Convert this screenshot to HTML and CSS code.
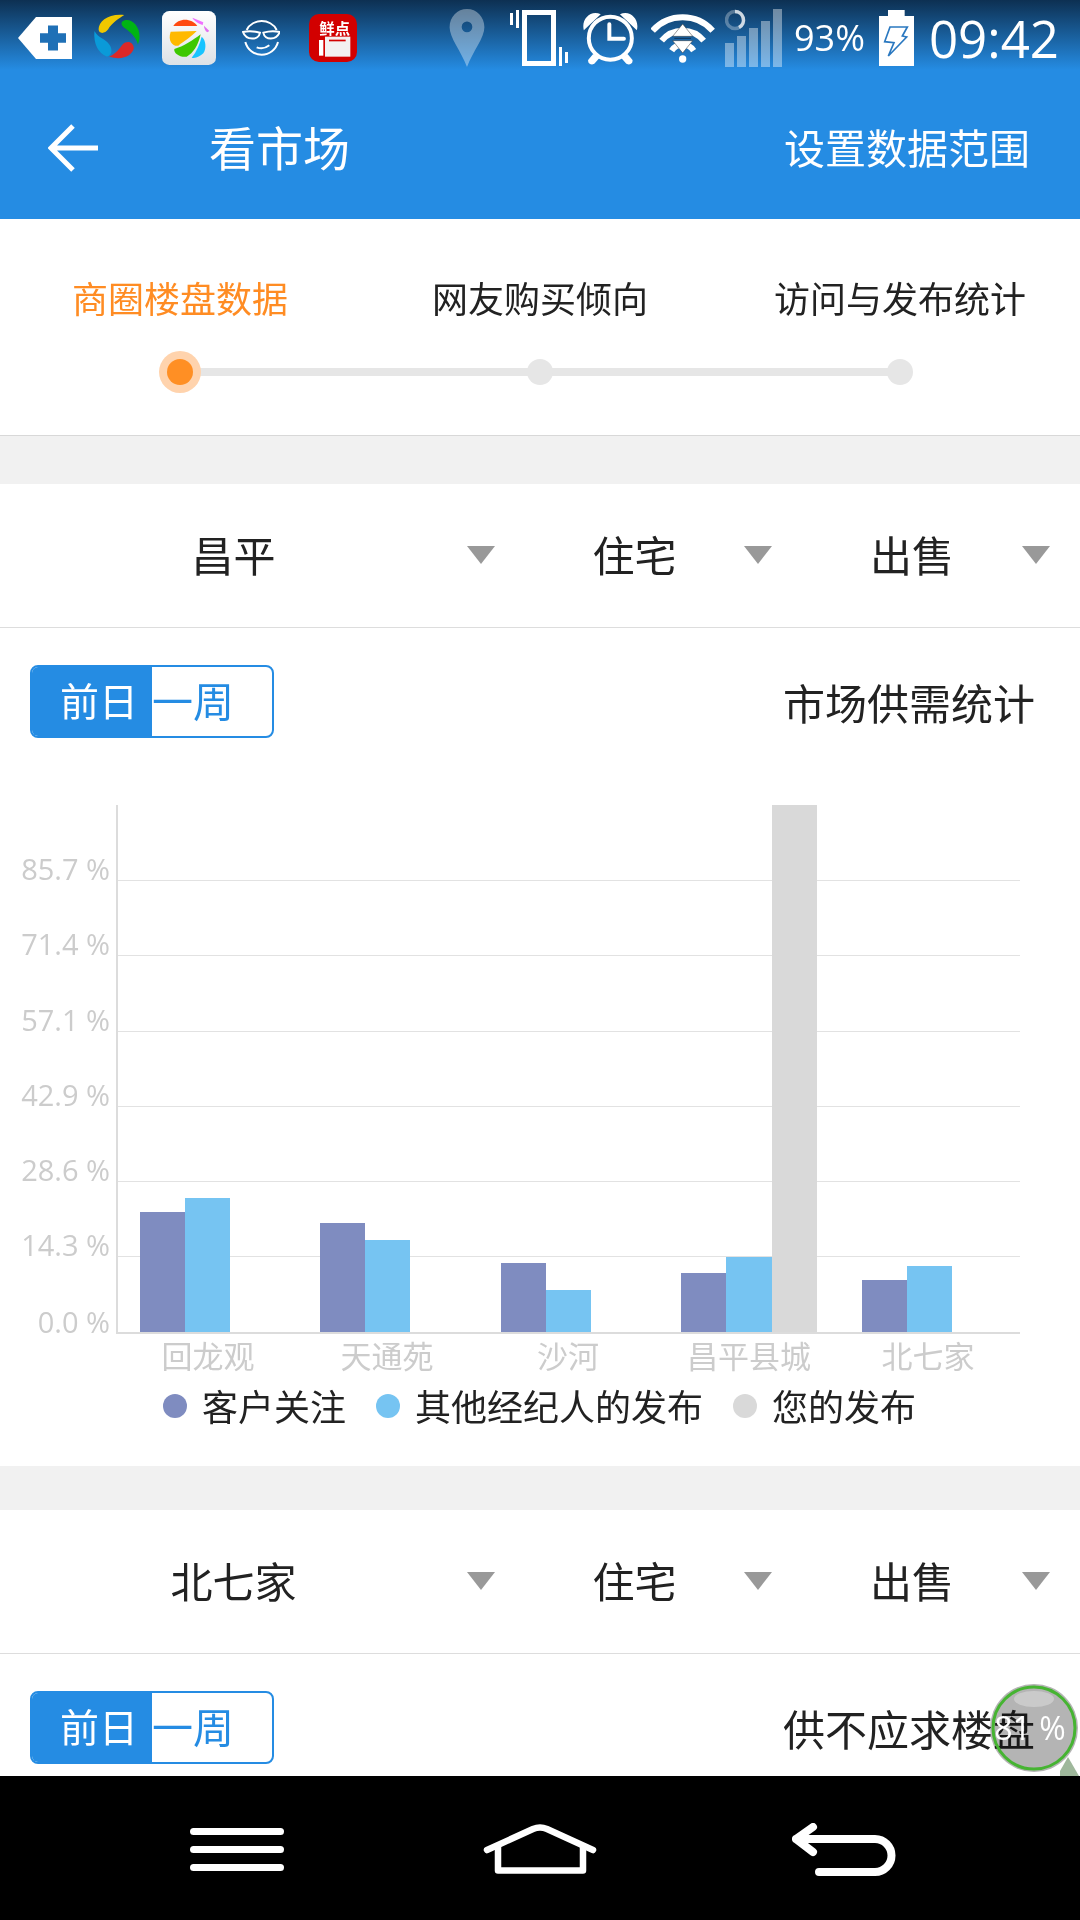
FILE: index.html
```html
<!DOCTYPE html>
<html lang="zh-CN">
<head>
    <meta charset="UTF-8">
    <meta name="viewport" content="width=device-width, initial-scale=1.0">
    <title>看市场</title>
    <link rel="stylesheet" href="styles.css">
</head>
<body>
<div class="page">

    <header class="header">
        <div class="status">
            <svg class="ic-tag" viewBox="0 0 54 44" preserveAspectRatio="none"><path fill="#fff" d="M0 22 18 0H54V44H18Z"/><path fill="#1f70b6" d="M30 9H40V17H48V27H40V35H30V27H22V17H30Z"/></svg>
            <svg class="ic-ball" viewBox="39 27 147 150">
                <path fill="#f0c800" d="M55 75C55 50 85 25 135 30 120 40 95 55 85 75 75 90 55 90 55 75Z"/>
                <path fill="#00b414" d="M130 50C150 35 185 60 183 100 182 110 180 118 178 122 170 95 150 80 135 70 125 62 125 55 130 50Z"/>
                <path fill="#dc2828" d="M88 160C110 150 120 135 130 122 145 108 165 115 165 135 160 155 130 175 88 160Z"/>
                <path fill="#0a9ad8" d="M42 80C55 105 75 100 90 125 100 140 95 160 80 160 55 150 38 120 42 80Z"/>
            </svg>
            <svg class="ic-app" viewBox="246 18 162 162">
                <defs><linearGradient id="appbg" x1="0" y1="0" x2="0" y2="1"><stop offset="0" stop-color="#fff"/><stop offset="1" stop-color="#dde1e6"/></linearGradient></defs>
                <rect x="246" y="18" width="162" height="162" rx="22" fill="url(#appbg)"/>
                <path fill="#ff4a10" d="M280 63C295 38 335 38 352 63Z"/>
                <path fill="#ffb900" d="M272 80 350 78C335 95 310 110 295 122 280 125 262 110 272 80Z"/>
                <path fill="#3ec800" d="M362 88C355 120 340 145 320 155 300 158 280 145 283 132 310 125 340 105 362 88Z"/>
                <path fill="#18c4ff" d="M365 95C378 105 380 130 370 145 360 155 345 162 335 158 350 140 360 115 365 95Z"/>
                <path fill="#f070ff" d="M337 38 370 52 368 60C355 55 342 48 337 38Z"/>
                <path fill="#e070f0" d="M372 62 388 78 382 82C376 78 372 70 372 62Z"/>
            </svg>
            <svg class="ic-face" viewBox="36 46 114 108" fill="none" stroke="#fff" stroke-width="6">
                <path d="M50 76C58 58 78 49 95 49 112 49 132 58 140 76"/>
                <path d="M46 112C52 135 72 150 95 150 118 150 138 135 144 112"/>
                <path d="M39 82Q62 76 90 84C86 108 48 108 39 82Z"/>
                <path d="M149 82Q126 76 100 84C104 108 140 108 149 82Z"/>
                <path d="M80 128Q100 136 118 122"/>
            </svg>
            <svg class="ic-news" viewBox="238 27 144 144">
                <rect x="238" y="27" width="144" height="144" rx="30" fill="#d20000"/>
                <text class="news-text" x="315" y="86">鲜点</text>
                <rect x="268" y="105" width="13" height="47" fill="#fff"/>
                <rect x="286" y="95" width="76" height="60" fill="#f3f0f0"/>
                <rect x="298" y="104" width="50" height="5" fill="#d20000"/>
            </svg>
            <svg class="ic-pin" viewBox="0 0 36 60"><path fill="#fff" fill-opacity=".36" fill-rule="evenodd" d="M18 0C8 0 0 8 0 19 0 30 12 44 18 60 24 44 36 30 36 19 36 8 28 0 18 0ZM18 13A5.500 5.500 0 1 1 18 24 5.500 5.500 0 0 1 18 13Z"/></svg>
            <svg class="ic-vibrate" viewBox="0 0 58 56" fill="#fff">
                <rect x="0" y="3" width="3" height="12"/>
                <rect x="6" y="0" width="3" height="18"/>
                <path fill-rule="evenodd" d="M12 0H46V56H12ZM17 5V51H41V5Z"/>
                <rect x="49" y="37" width="3" height="19"/>
                <rect x="55" y="42" width="3" height="11"/>
            </svg>
            <svg class="ic-alarm" viewBox="25 33 165 160">
                <circle cx="107" cy="112" r="65" fill="none" stroke="#fff" stroke-width="12"/>
                <path fill="#fff" d="M27 88C18 55 48 25 78 40ZM187 88C196 55 166 25 136 40Z"/>
                <path fill="#fff" d="M55 160 40 178C38 192 55 194 60 188L74 172ZM159 160 174 178C176 192 159 194 154 188L140 172Z"/>
                <path fill="none" stroke="#fff" stroke-width="12" stroke-linecap="round" d="M104 70V114H148"/>
            </svg>
            <svg class="ic-wifi" viewBox="230 45 195 150">
                <g fill="none" stroke="#fff" stroke-width="18">
                    <path d="M235 95A121 121 0 0 1 415 95"/>
                    <path d="M262 125A81 81 0 0 1 388 125"/>
                    <path d="M292 155A40 40 0 0 1 358 155"/>
                </g>
                <circle cx="325" cy="180" r="11" fill="#fff"/>
                <path fill="#fff" stroke="#333" stroke-width="1.500" d="M325 75 355 112H295ZM295 125H355L325 162Z"/>
                <path stroke="#0e3358" stroke-width="3" d="M300 118H350"/>
            </svg>
            <svg class="ic-signal" viewBox="0 0 58 58">
                <g fill="#fff" fill-opacity=".4">
                    <rect x="0" y="34" width="9" height="24"/>
                    <rect x="12" y="27" width="9" height="31"/>
                    <rect x="24" y="19" width="9" height="39"/>
                    <rect x="36" y="12" width="9" height="46"/>
                    <rect x="48" y="0" width="9" height="58"/>
                </g>
                <circle cx="10" cy="11" r="8.500" fill="none" stroke="#fff" stroke-opacity=".3" stroke-width="3.500"/>
                <path fill="none" stroke="#fff" stroke-opacity=".7" stroke-width="3.500" d="M10 2.500A8.500 8.500 0 0 1 14 18.500"/>
            </svg>
            <span class="battery-text">93%</span>
            <svg class="ic-battery" viewBox="285 27 105 168">
                <path fill="#fff" d="M312 27H362V45H390V195H285V45H312Z"/>
                <path fill="#fff" stroke="#2a78c0" stroke-width="5" d="M318 78H370L355 105 368 108 313 165 330 125 302 122Z"/>
            </svg>
            <span class="clock">09:42</span>
        </div>
        <div class="titlebar">
            <svg class="ic-back" viewBox="0 0 50 48" fill="none" stroke="#fff" stroke-width="5"><path d="M25 2 3 24 25 46M3 24H50"/></svg>
            <h1 class="title">看市场</h1>
            <a class="action">设置数据范围</a>
        </div>
    </header>

    <main class="content">
        <section class="stepper">
            <div class="step-labels">
                <span class="step-label active">商圈楼盘数据</span>
                <span class="step-label">网友购买倾向</span>
                <span class="step-label">访问与发布统计</span>
            </div>
            <div class="step-track">
                <span class="step-dot active"></span>
                <span class="step-dot"></span>
                <span class="step-dot"></span>
            </div>
        </section>

        <section class="panel panel-first">
            <div class="filters">
                <div class="filter"><span class="filter-text">昌平</span><i class="caret"></i></div>
                <div class="filter"><span class="filter-text">住宅</span><i class="caret"></i></div>
                <div class="filter"><span class="filter-text">出售</span><i class="caret"></i></div>
            </div>
            <div class="panel-head">
                <div class="toggle"><span class="seg on">前日</span><span class="seg"><b>一周</b></span></div>
                <span class="panel-title">市场供需统计</span>
            </div>
            <svg class="chart" viewBox="0 790 1080 650">
                <g class="grid">
                    <path d="M117 880.500H1020"/>
                    <path d="M117 955.500H1020"/>
                    <path d="M117 1031.500H1020"/>
                    <path d="M117 1106.500H1020"/>
                    <path d="M117 1181.500H1020"/>
                    <path d="M117 1256.500H1020"/>
                </g>
                <path class="axis" d="M117 805V1333H1020"/>

                <g class="bars-a">
                    <rect x="140" y="1212" width="45" height="120"/>
                    <rect x="320" y="1223" width="45" height="109"/>
                    <rect x="501" y="1263" width="45" height="69"/>
                    <rect x="681" y="1273" width="45" height="59"/>
                    <rect x="862" y="1280" width="45" height="52"/>
                </g>
                <g class="bars-b">
                    <rect x="185" y="1198" width="45" height="134"/>
                    <rect x="365" y="1240" width="45" height="92"/>
                    <rect x="546" y="1290" width="45" height="42"/>
                    <rect x="726" y="1257" width="46" height="75"/>
                    <rect x="907" y="1266" width="45" height="66"/>
                </g>
                <rect class="bars-c" x="772" y="805" width="45" height="527"/>

                <g class="y-labels">
                    <text x="110" y="880">85.7 %</text>
                    <text x="110" y="955">71.4 %</text>
                    <text x="110" y="1031">57.1 %</text>
                    <text x="110" y="1106">42.9 %</text>
                    <text x="110" y="1181">28.6 %</text>
                    <text x="110" y="1256">14.3 %</text>
                    <text x="110" y="1333">0.0 %</text>
                </g>
                <g class="x-labels">
                    <text x="208" y="1368">回龙观</text>
                    <text x="387" y="1368">天通苑</text>
                    <text x="568" y="1368">沙河</text>
                    <text x="749" y="1368">昌平县城</text>
                    <text x="928" y="1368">北七家</text>
                </g>

                <circle class="dot-a" cx="175" cy="1406" r="12"/>
                <text class="legend" x="202" y="1421">客户关注</text>
                <circle class="dot-b" cx="388" cy="1406" r="12"/>
                <text class="legend" x="415" y="1421">其他经纪人的发布</text>
                <circle class="dot-c" cx="745" cy="1406" r="12"/>
                <text class="legend" x="772" y="1421">您的发布</text>
            </svg>
        </section>

        <section class="panel panel-last">
            <div class="filters">
                <div class="filter"><span class="filter-text">北七家</span><i class="caret"></i></div>
                <div class="filter"><span class="filter-text">住宅</span><i class="caret"></i></div>
                <div class="filter"><span class="filter-text">出售</span><i class="caret"></i></div>
            </div>
            <div class="panel-head">
                <div class="toggle"><span class="seg on">前日</span><span class="seg"><b>一周</b></span></div>
                <span class="panel-title">供不应求楼盘</span>
            </div>
        </section>
    </main>

    <nav class="navbar">
        <svg class="nav-menu" viewBox="0 0 94 43" fill="#fff">
            <rect y="0" width="94" height="7" rx="3.500"/>
            <rect y="18" width="94" height="7" rx="3.500"/>
            <rect y="36" width="94" height="7" rx="3.500"/>
        </svg>
        <svg class="nav-home" viewBox="0 0 114 50" fill="none" stroke="#fff" stroke-width="6.500" stroke-linecap="round" stroke-linejoin="round">
            <path d="M4 26 50 5Q57 2 64 5L110 26"/>
            <path d="M15 23V46.500H100V23"/>
        </svg>
        <svg class="nav-back" viewBox="0 0 104 53" fill="none" stroke="#fff" stroke-width="8" stroke-linecap="round" stroke-linejoin="round">
            <path d="M21 4 4 16 21 29M4 16H83A16.500 16.500 0 0 1 83 49H27"/>
        </svg>
    </nav>

    <div class="bubble-disc"></div>
    <svg class="bubble" viewBox="0 0 90 96">
        <path fill="#9fb89c" d="M70 88 78 74 89 93H70Z"/>
        <circle cx="44" cy="45" r="41" fill="none" stroke="#46b432" stroke-width="3"/>
        <ellipse cx="44" cy="16" rx="20" ry="8" fill="#fff" fill-opacity=".3"/>
        <text class="bubble-text" x="40" y="57">81 %</text>
    </svg>

</div>
</body>
</html>
```

FILE: styles.css
```css
* {
    box-sizing: border-box;
}

body {
    margin: 0;
    font-family: "Open Sans", "Noto Sans CJK SC", sans-serif;
    color: #222;
    background-color: #f1f1f1;
}

svg {
    display: block;
    flex: none;
}

.page {
    position: relative;
    width: 1080px;
    height: 1920px;
    display: flex;
    flex-direction: column;
    overflow: hidden;
}

/* header */
.header {
    flex: none;
    background: linear-gradient(#0d3052 0, #258ce3 70px);
    color: #fff;
}

.status {
    height: 76px;
    display: flex;
    align-items: center;
}

.ic-tag { width: 54px; height: 42px; margin-left: 18px; }
.ic-ball { width: 48px; height: 48px; margin-left: 21px; }
.ic-app { width: 54px; height: 54px; margin-left: 21px; }
.ic-face { width: 38px; height: 36px; margin-left: 26px; }
.ic-news { width: 48px; height: 48px; margin-left: 29px; }
.ic-pin { width: 36px; height: 58px; margin-left: 92px; }
.ic-vibrate { width: 58px; height: 56px; margin-left: 25px; }
.ic-alarm { width: 55px; height: 53px; margin-left: 15px; }
.ic-wifi { width: 65px; height: 50px; margin-left: 13px; margin-top: 1px; }
.ic-signal { width: 58px; height: 58px; margin-left: 9px; }
.ic-battery { width: 35px; height: 56px; margin-left: 14px; }

.news-text {
    font-size: 46px;
    font-weight: 700;
    fill: #fff;
    text-anchor: middle;
}

.battery-text {
    font-size: 36px;
    line-height: 48px;
    margin-left: 11px;
}

.clock {
    font-size: 51px;
    line-height: 60px;
    margin-left: 15px;
}

.titlebar {
    height: 143px;
    display: flex;
    align-items: center;
    padding: 0 50px 0 48px;
}

.ic-back {
    width: 50px;
    height: 48px;
}

.title {
    margin: 0 0 4px 111px;
    font-size: 47px;
    font-weight: 400;
}

.action {
    margin: 0 0 4px auto;
    font-size: 41px;
}

/* step indicator */
.content {
    flex: 1;
    min-height: 0;
    overflow: hidden;
}

.stepper {
    height: 217px;
    padding-top: 60px;
    background-color: #fff;
    border-bottom: 1px solid #d8d8d8;
}

.step-labels,
.step-track {
    display: grid;
    grid-template-columns: repeat(3, 360px);
    justify-items: center;
    align-items: center;
}

.step-label {
    font-size: 36px;
    line-height: 42px;
    white-space: nowrap;
}

.step-label.active {
    color: #ff8c23;
}

.step-track {
    position: relative;
    height: 42px;
    margin-top: 30px;
}

.step-track::before {
    content: "";
    position: absolute;
    left: 180px;
    right: 180px;
    top: 17px;
    height: 8px;
    background-color: #e6e6e6;
}

.step-dot {
    position: relative;
    width: 26px;
    height: 26px;
    border-radius: 50%;
    background-color: #e6e6e6;
}

.step-dot.active {
    background-color: #ff8f24;
    box-shadow: 0 0 0 8px #ffd3ad;
}

/* panels */
.panel {
    margin-top: 44px;
    background-color: #fff;
}

.panel-first {
    margin-top: 48px;
    padding-bottom: 26px;
}

.panel-last {
    padding-bottom: 60px;
}

.filters {
    height: 144px;
    display: grid;
    grid-template-columns: 495px 277px 278px;
    align-items: center;
    border-bottom: 1px solid #ddd;
}

.filter {
    display: flex;
    align-items: center;
    padding-left: 30px;
}

.filter:first-child {
    padding-left: 0;
}

.filter-text {
    flex: 1;
    margin-bottom: 4px;
    text-align: center;
    font-size: 42px;
}

.caret {
    width: 0;
    height: 0;
    margin-bottom: 2px;
    border-left: 14px solid transparent;
    border-right: 14px solid transparent;
    border-top: 18px solid #999;
}

.panel-head {
    display: flex;
    align-items: center;
    justify-content: space-between;
    padding: 37px 45px 0 30px;
}

.toggle {
    width: 244px;
    height: 73px;
    display: flex;
    border: 2px solid #258ce3;
    border-radius: 8px;
    overflow: hidden;
    font-size: 41px;
    line-height: 68px;
    color: #258ce3;
}

.seg b {
    display: block;
    font-weight: 400;
}

.seg.on {
    width: 120px;
    padding-left: 28px;
    font-size: 39px;
    background-color: #258ce3;
    color: #fff;
}

.panel-title {
    font-size: 42px;
}

/* chart */
.chart {
    width: 1080px;
    height: 650px;
    margin-top: 52px;
}

.grid path {
    stroke: #e2e2e2;
    stroke-width: 1;
}

.axis {
    fill: none;
    stroke: #dcdcdc;
    stroke-width: 2;
}

.bars-a, .dot-a { fill: #7f8cc0; }
.bars-b, .dot-b { fill: #76c4f2; }
.bars-c, .dot-c { fill: #d9d9d9; }

.y-labels text {
    font-size: 29px;
    fill: #ccc;
    text-anchor: end;
}

.x-labels text {
    font-size: 31px;
    fill: #ccc;
    text-anchor: middle;
}

.legend {
    font-size: 36px;
    fill: #222;
}

/* bottom nav */
.navbar {
    flex: none;
    height: 144px;
    display: flex;
    align-items: flex-start;
    padding-left: 190px;
    background-color: #000;
}

.nav-menu { width: 94px; height: 43px; margin-top: 52px; }
.nav-home { width: 114px; height: 50px; margin: 48px 0 0 199px; }
.nav-back { width: 104px; height: 53px; margin: 47px 0 0 195px; }

/* floating memory bubble */
.bubble-disc {
    position: absolute;
    left: 990px;
    top: 1684px;
    width: 88px;
    height: 88px;
    border-radius: 50%;
    background-color: #b4b4b4;
    mix-blend-mode: multiply;
}

.bubble {
    position: absolute;
    left: 990px;
    top: 1683px;
    width: 90px;
    height: 96px;
}

.bubble-text {
    font-size: 32px;
    fill: #fff;
    text-anchor: middle;
}
```
